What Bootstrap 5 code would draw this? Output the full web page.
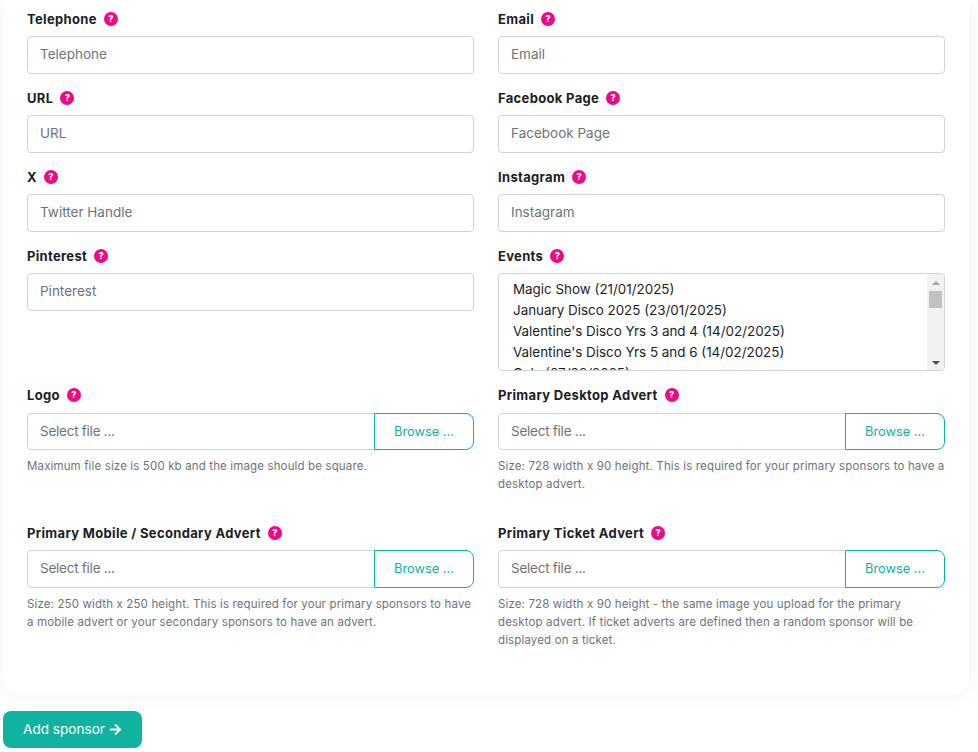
<!DOCTYPE html>
<html lang="en">
<head>
<meta charset="utf-8">
<title>Add sponsor</title>
<link href="https://cdn.jsdelivr.net/npm/bootstrap@5.3.0/dist/css/bootstrap.min.css" rel="stylesheet">
<style>
html,body{height:752px;overflow:hidden}
body{font-family:Inter,"Liberation Sans",sans-serif;background:#fff;color:#1b1c25;font-size:14px}
.page-top{padding:0 9px 0 3px}
.sheet{background:#fff;border-radius:0 0 16px 16px;box-shadow:0 2px 18px rgba(0,0,0,.05);padding:12px 24px 0;height:695px}
.sheet .row{--bs-gutter-x:24px;--bs-gutter-y:0}
.fld{height:79px}
.fld-sel{height:139px}
.fld-file1{height:138px}
.fld-file2{height:162px}
.lbl{display:flex;align-items:center;gap:7px;font-weight:700;font-size:13px;letter-spacing:.33px;line-height:14px;height:14px;margin-bottom:10px}
.fld-file1 .lbl{margin-bottom:11px}
.hint{width:14px;height:14px;border-radius:50%;background:#ec0a85;color:#fff;font-size:9px;font-weight:800;letter-spacing:0;line-height:14px;text-align:center;flex:none}
.sheet .form-control{height:38px;font-size:13.5px;padding:5px 12px 7px;border-color:#ced4da;border-radius:4px;color:#1b1c25}
.sheet .form-control::placeholder{color:#6d737a}
.sheet .form-select{height:98px;font-size:13.4px;padding:7px 17px 0 10px;background-image:none;border-color:#ced4da;border-radius:4px;color:#1b1c25;overflow:hidden}
.sheet .form-select option{padding:0 4px;line-height:21px;min-height:21px}
.fake-bar{top:1px;right:1px;bottom:1px;width:17px;background:#f1f1f1;border-radius:0 3px 3px 0;pointer-events:none}
.fake-up{width:0;height:0;margin:7px auto 6px;border:solid transparent;border-width:0 4px 4px;border-bottom-color:#a3a3a3}
.fake-thumb{width:13px;height:17px;margin:0 auto;background:#c1c1c1}
.fake-down{width:0;height:0;margin:auto auto 5px;border:solid transparent;border-width:4px 4px 0;border-top-color:#505050}
.fileline .form-control{height:37px;letter-spacing:-.25px}
.fld-file2 .fileline .form-control,.fld-file2 .fileline .btn-browse{height:38px}
.fileline .btn-browse{width:100px;height:37px;font-size:12.8px;color:#10b3a0;border:1px solid #10b3a0;border-radius:0 8px 8px 0;background:#fff;padding:0}
.note{font-size:11.5px;letter-spacing:.14px;line-height:18px;color:#6d737a;margin-top:7px}
.foot{padding:16px 3px 0}
.btn-add{background:#10b3a0;color:#fff;border:0;border-radius:8px;width:139px;height:37px;font-size:13.6px;padding:0;display:inline-flex;align-items:center;justify-content:center;gap:4px}
.btn-add:hover{background:#0ea291;color:#fff}
</style>
</head>
<body>
<div class="page-top">
<form class="sheet">
  <div class="row">
    <div class="col-6 fld"><label class="lbl">Telephone <span class="hint">?</span></label><input class="form-control" placeholder="Telephone"></div>
    <div class="col-6 fld"><label class="lbl">Email <span class="hint">?</span></label><input class="form-control" placeholder="Email"></div>
    <div class="col-6 fld"><label class="lbl">URL <span class="hint">?</span></label><input class="form-control" placeholder="URL"></div>
    <div class="col-6 fld"><label class="lbl">Facebook Page <span class="hint">?</span></label><input class="form-control" placeholder="Facebook Page"></div>
    <div class="col-6 fld"><label class="lbl">X <span class="hint">?</span></label><input class="form-control" placeholder="Twitter Handle"></div>
    <div class="col-6 fld"><label class="lbl">Instagram <span class="hint">?</span></label><input class="form-control" placeholder="Instagram"></div>
    <div class="col-6 fld-sel"><label class="lbl">Pinterest <span class="hint">?</span></label><input class="form-control" placeholder="Pinterest"></div>
    <div class="col-6 fld-sel"><label class="lbl">Events <span class="hint">?</span></label>
      <div class="position-relative">
      <select class="form-select" multiple>
        <option>Magic Show (21/01/2025)</option>
        <option>January Disco 2025 (23/01/2025)</option>
        <option>Valentine's Disco Yrs 3 and 4 (14/02/2025)</option>
        <option>Valentine's Disco Yrs 5 and 6 (14/02/2025)</option>
        <option>Gala (07/03/2025)</option>
        <option>Spring Fair (21/03/2025)</option>
      </select>
      <div class="fake-bar position-absolute d-flex flex-column" aria-hidden="true"><div class="fake-up"></div><div class="fake-thumb"></div><div class="fake-down"></div></div>
      </div>
    </div>
    <div class="col-6 fld-file1"><label class="lbl">Logo <span class="hint">?</span></label>
      <div class="input-group fileline"><input class="form-control" placeholder="Select file ..."><button type="button" class="btn btn-browse">Browse ...</button></div>
      <p class="note">Maximum file size is 500 kb and the image should be square.</p></div>
    <div class="col-6 fld-file1"><label class="lbl">Primary Desktop Advert <span class="hint">?</span></label>
      <div class="input-group fileline"><input class="form-control" placeholder="Select file ..."><button type="button" class="btn btn-browse">Browse ...</button></div>
      <p class="note">Size: 728 width x 90 height. This is required for your primary sponsors to have a desktop advert.</p></div>
    <div class="col-6 fld-file2"><label class="lbl">Primary Mobile / Secondary Advert <span class="hint">?</span></label>
      <div class="input-group fileline"><input class="form-control" placeholder="Select file ..."><button type="button" class="btn btn-browse">Browse ...</button></div>
      <p class="note">Size: 250 width x 250 height. This is required for your primary sponsors to have a mobile advert or your secondary sponsors to have an advert.</p></div>
    <div class="col-6 fld-file2"><label class="lbl">Primary Ticket Advert <span class="hint">?</span></label>
      <div class="input-group fileline"><input class="form-control" placeholder="Select file ..."><button type="button" class="btn btn-browse">Browse ...</button></div>
      <p class="note">Size: 728 width x 90 height - the same image you upload for the primary desktop advert. If ticket adverts are defined then a random sponsor will be displayed on a ticket.</p></div>
  </div>
</form>
</div>
<div class="foot">
  <button type="button" class="btn btn-add">Add sponsor
    <svg width="13" height="13" viewBox="0 0 448 512" fill="currentColor" aria-hidden="true"><path d="M190.500 66.900l22.200-22.200c9.400-9.400 24.600-9.400 33.900 0L441 239c9.400 9.400 9.400 24.600 0 33.900L246.600 467.300c-9.400 9.400-24.600 9.400-33.900 0l-22.200-22.200c-9.500-9.500-9.300-25 .4-34.300L311.400 296H24c-13.300 0-24-10.700-24-24v-32c0-13.300 10.700-24 24-24h287.400L190.900 101.200c-9.800-9.300-10-24.800-.4-34.300z"/></svg>
  </button>
</div>
<script src="https://cdn.jsdelivr.net/npm/bootstrap@5.3.0/dist/js/bootstrap.bundle.min.js"></script>
</body>
</html>
